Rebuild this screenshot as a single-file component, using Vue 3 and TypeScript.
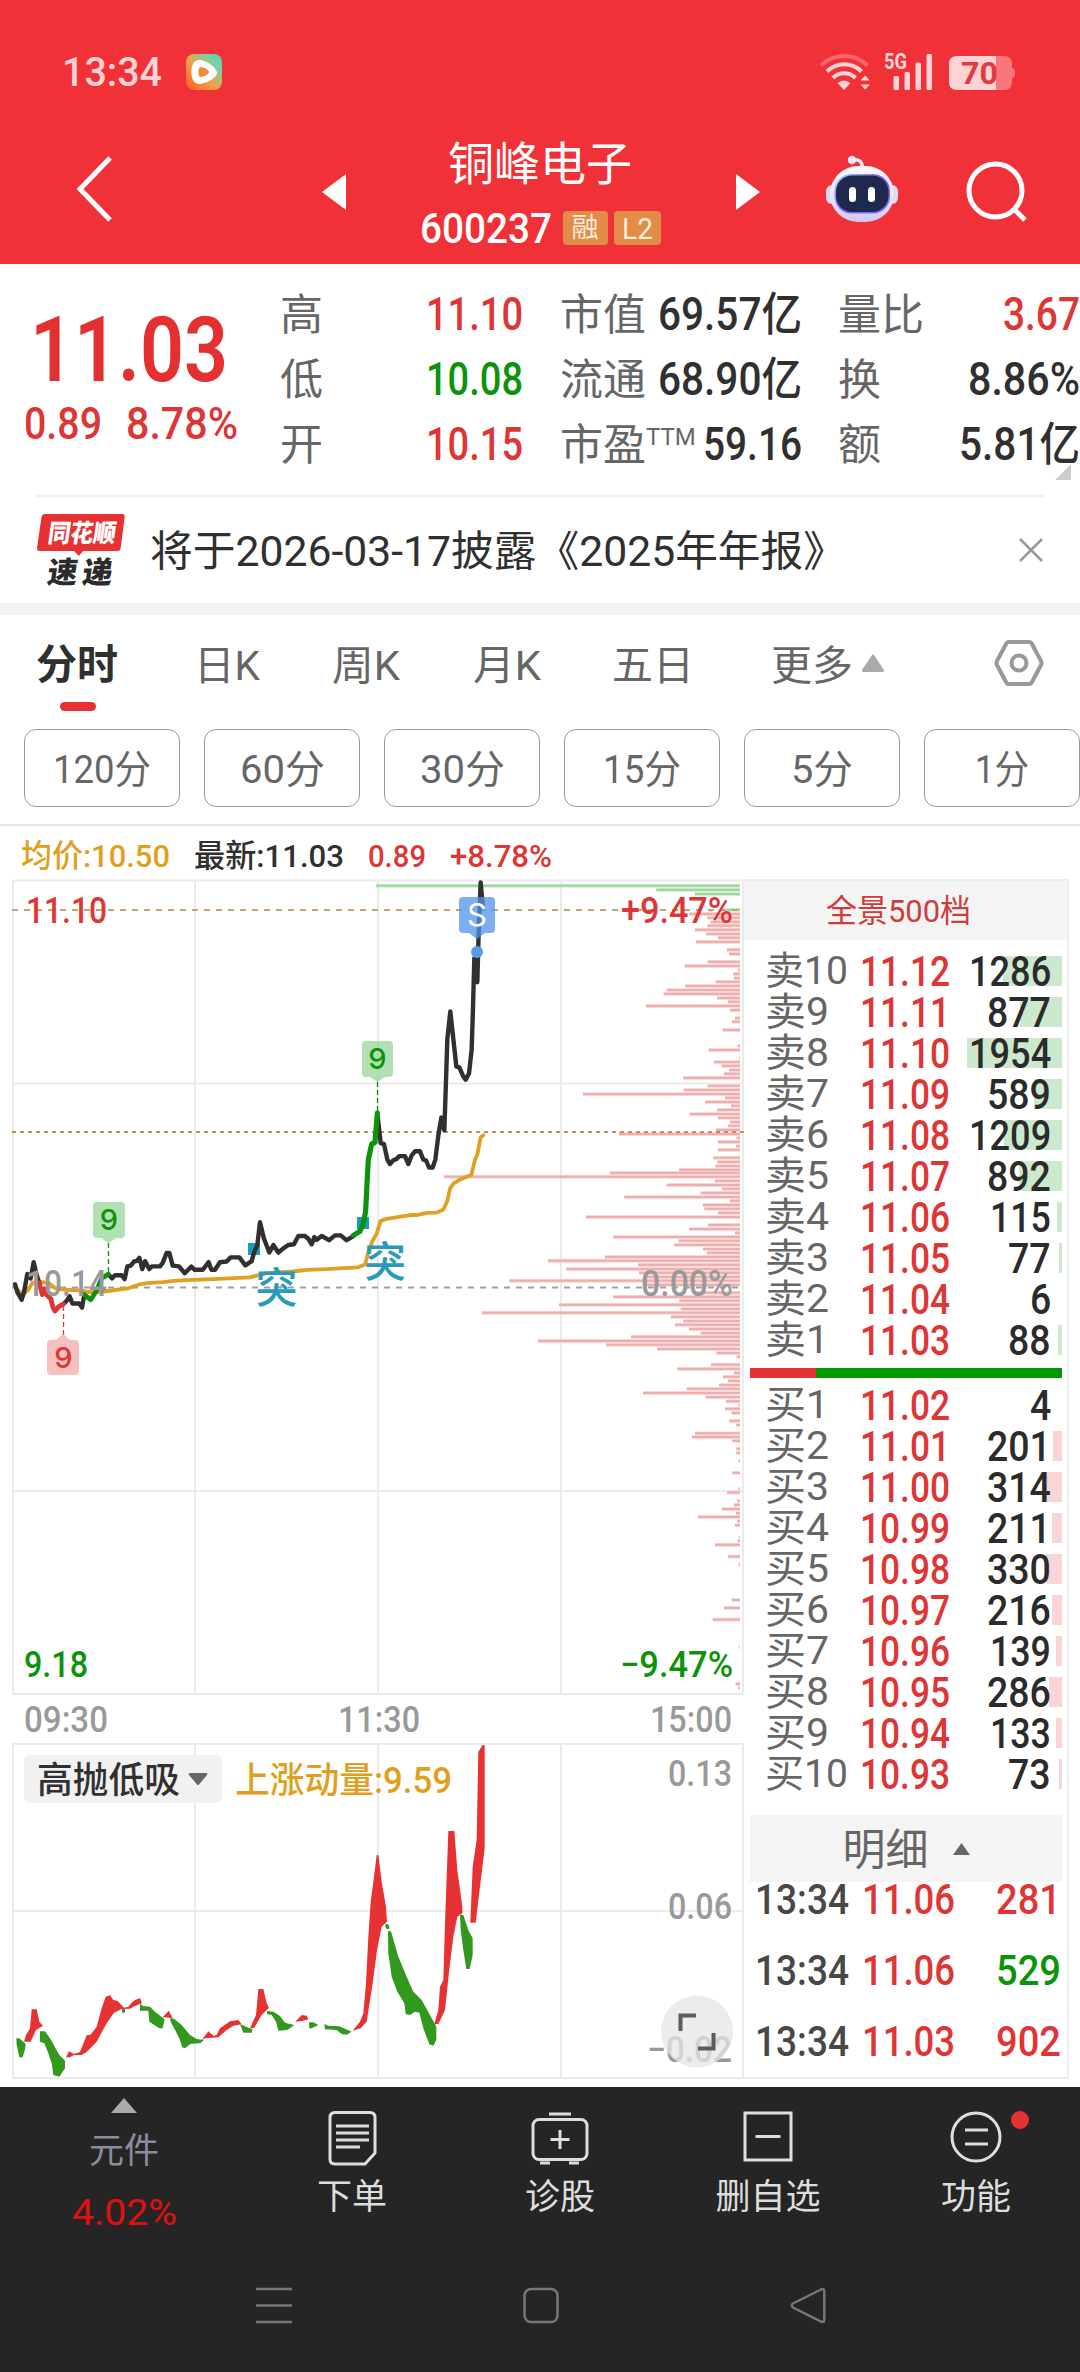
<script setup lang="ts">
import { h } from 'vue'

interface FitProps {
  t: string
  w: number
  s: number
  c?: string
  b?: number
}

// Text run drawn at a fixed advance width; the box is one em tall with the capitals centred in it.
const Fit = (p: FitProps) =>
  h(
    'svg',
    { width: p.w, height: p.s, viewBox: `0 0 ${p.w} ${p.s}`, style: 'display:block;flex:none;overflow:visible' },
    [
      h(
        'text',
        {
          x: 0,
          y: p.s * 0.856,
          'font-size': p.s,
          'font-weight': p.b ?? 400,
          fill: p.c ?? '#333',
          textLength: p.w,
          lengthAdjust: 'spacingAndGlyphs',
        },
        p.t,
      ),
    ],
  )
Fit.props = ['t', 'w', 's', 'c', 'b']

const RED = '#de3535'
const GREEN = '#0b930b'
const INK = '#303030'

const stats = [
  [
    { k: '高', v: '11.10', w: 97, c: RED },
    { k: '低', v: '10.08', w: 97, c: GREEN },
    { k: '开', v: '10.15', w: 97, c: RED },
  ],
  [
    { k: '市值', v: '69.57亿', w: 144, c: INK },
    { k: '流通', v: '68.90亿', w: 144, c: INK },
    { k: '市盈', sup: 'TTM', v: '59.16', w: 99, c: INK },
  ],
  [
    { k: '量比', v: '3.67', w: 77, c: RED },
    { k: '换', v: '8.86%', w: 112, c: INK },
    { k: '额', v: '5.81亿', w: 121, c: INK },
  ],
]

const tabs = [
  { t: '日K', w: 66, ml: 76 },
  { t: '周K', w: 68, ml: 72 },
  { t: '月K', w: 68, ml: 73 },
  { t: '五日', w: 82, ml: 71 },
  { t: '更多', w: 82, ml: 77 },
]

const periods = [
  { t: '120分', w: 98 },
  { t: '60分', w: 85 },
  { t: '30分', w: 85 },
  { t: '15分', w: 78 },
  { t: '5分', w: 62 },
  { t: '1分', w: 54 },
]

interface Level {
  n: number
  p: string
  q: number
  bar: number
}
const sells: Level[] = [
  { n: 10, p: '11.12', q: 1286, bar: 59 },
  { n: 9, p: '11.11', q: 877, bar: 42 },
  { n: 8, p: '11.10', q: 1954, bar: 95 },
  { n: 7, p: '11.09', q: 589, bar: 28 },
  { n: 6, p: '11.08', q: 1209, bar: 58 },
  { n: 5, p: '11.07', q: 892, bar: 43 },
  { n: 4, p: '11.06', q: 115, bar: 5 },
  { n: 3, p: '11.05', q: 77, bar: 3 },
  { n: 2, p: '11.04', q: 6, bar: 0 },
  { n: 1, p: '11.03', q: 88, bar: 4 },
]
const buys: Level[] = [
  { n: 1, p: '11.02', q: 4, bar: 0 },
  { n: 2, p: '11.01', q: 201, bar: 9 },
  { n: 3, p: '11.00', q: 314, bar: 15 },
  { n: 4, p: '10.99', q: 211, bar: 10 },
  { n: 5, p: '10.98', q: 330, bar: 16 },
  { n: 6, p: '10.97', q: 216, bar: 10 },
  { n: 7, p: '10.96', q: 139, bar: 6 },
  { n: 8, p: '10.95', q: 286, bar: 13 },
  { n: 9, p: '10.94', q: 133, bar: 6 },
  { n: 10, p: '10.93', q: 73, bar: 3 },
]
const books = [
  { side: '卖', cls: 'sell', rows: sells },
  { side: '买', cls: 'buy', rows: buys },
]
const trades = [
  { p: '11.06', q: '281', c: RED },
  { p: '11.06', q: '529', c: GREEN },
  { p: '11.03', q: '902', c: RED },
]

// A leading 1 takes less room than the other digits.
const qtyWidth = (q: number) => {
  const s = String(q)
  return s.length * 21.3 - (s[0] === '1' ? 3 : 0)
}

// Volume profile: y and left edge in chart units, every bar ends at 1140.
const unpack = (s: string): [number, number][] =>
  s.split(' ').map((e) => e.split(':').map(Number) as [number, number])
const askBars = unpack('75:48 87:889 99:1005 145:1100')
const chips = unpack(
  '157:988 168:1042 180:1052 191:1042 203:1005 215:1038 226:1074 238:1008 261:1101 273:1107 296:1043 308:974 319:1134 331:1120 343:1122 354:1067 366:976 378:920 389:911 401:1071 412:1104 424:858 436:1110 459:1125 470:1116 494:1088 540:1133 552:1046 575:1138 587:1062 598:1085 610:1107 621:1092 633:970 656:1043 668:971 680:669 691:1095 703:1035 714:1113 726:1071 738:989 749:1074 761:1110 772:1104 784:1068 796:777 807:1130 819:1074 831:1128 842:1074 865:1060 877:1072 889:1067 900:957 909:750 920:252 932:1065 944:920 955:1086 967:1022 979:793 990:1110 1002:1029 1013:1033 1025:1074 1037:678 1060:1044 1072:987 1083:1125 1095:760 1106:956 1118:942 1130:1029 1141:1041 1153:735 1164:564 1176:834 1188:619 1199:837 1211:850 1222:448 1234:857 1257:1000 1269:760 1280:958 1292:597 1304:962 1315:366 1327:933 1339:970 1350:945 1362:987 1374:1022 1385:813 1397:534 1408:738 1420:891 1432:1070 1443:1130 1466:1053 1478:952 1490:1122 1501:1089 1513:1104 1525:1077 1536:980 1548:849 1560:1037 1572:1098 1583:1136 1594:1095 1606:1115 1629:1108 1641:1129 1665:1005 1676:996 1687:1117 1710:1129 1722:1129 1745:1136 1780:1117 1826:1136 1837:1101 1861:1131 1873:1122 1885:1086 1897:1128 1908:1014 1920:1132 1932:1125 1966:1137 1977:1133 1989:1065 2023:1104 2046:1136 2149:1115 2172:1092 2206:1058 2287:1138 2393:1127 2405:1135',
)
const bars = [
  ...askBars.map(([y, x]) => ({ y, x, light: '#c4eec4', dark: '#a2d3a2' })),
  ...chips.map(([y, x]) => ({ y, x, light: '#fdcfcf', dark: '#eab0b0' })),
].map((b) => ({ ...b, y: 860 + b.y / 2.904, x: 360 + b.x / 3 }))

const priceLines = [
  { c: '#303030', w: 4.4, p: '45,1232 52,1255 65,1277 72,1255 82,1202 92,1215 101,1168 110,1205 118,1228' },
  { c: '#303030', w: 4.4, p: '190,1290 200,1280 209,1267 217,1288 238,1288 246,1300 253,1262' },
  {
    c: '#303030',
    w: 4.4,
    p: '325,1203 336,1215 345,1206 365,1206 374,1217 382,1180 392,1178 402,1166 411,1164 418,1155 427,1188 435,1165 448,1188 456,1180 480,1180 488,1170 500,1141 508,1141 518,1178 537,1180 554,1200 574,1181 584,1190 608,1190 626,1168 634,1190 645,1190 660,1168 680,1166 692,1154 718,1154 736,1177 755,1165 762,1140 772,1118 780,1052 792,1100 808,1140 820,1118 835,1140 850,1128 865,1118 882,1116 895,1092 915,1092 925,1100 935,1116 943,1095 950,1103 965,1092 987,1104 1005,1090 1022,1090 1040,1104 1060,1092',
  },
  {
    c: '#303030',
    w: 4.4,
    p: '1133,745 1142,822 1152,825 1162,870 1170,883 1180,872 1190,868 1198,860 1215,860 1225,883 1235,858 1245,846 1260,846 1270,870 1278,872 1287,893 1298,893 1306,870 1315,800 1324,748 1333,785 1336,700 1342,520 1351,440 1360,520 1369,600 1378,602 1388,625 1397,638 1407,620 1415,550 1419,430 1423,285 1428,285 1432,355 1436,210 1442,65 1448,130',
  },
]
const tintLines = [
  { c: '#de3535', w: 4.8, p: '118,1228 127,1262 134,1245 142,1265 153,1275 158,1297 165,1310 175,1298 190,1290' },
  { c: '#0b930b', w: 4.8, p: '253,1262 263,1270 272,1277 290,1250 305,1215 325,1203' },
  { c: '#0b930b', w: 5.2, p: '1060,1090 1080,1078 1090,1055 1097,1020 1101,940 1105,870 1115,825 1125,820 1132,735' },
]
const avgLine =
  '45,1240 68,1262 85,1248 98,1227 120,1225 145,1228 165,1243 200,1248 235,1250 270,1255 300,1255 350,1248 380,1245 420,1232 450,1228 490,1226 520,1222 560,1220 640,1217 700,1214 750,1212 770,1207 800,1200 880,1195 920,1190 980,1188 1030,1185 1075,1183 1095,1175 1105,1140 1117,1107 1130,1085 1142,1048 1160,1042 1230,1031 1250,1031 1280,1025 1310,1024 1330,1015 1342,990 1350,955 1360,940 1380,928 1400,920 1414,915 1425,870 1432,856 1442,805 1450,799'

const momentum = [
  { up: false, p: '49,1195 58,1195 77,1212 75,1228 68,1252 58,1252 50,1215' },
  { up: true, p: '72,1205 78,1185 90,1165 95,1108 110,1108 118,1145 129,1157 108,1170 92,1205' },
  { up: false, p: '120,1174 135,1174 150,1195 178,1245 195,1262 195,1285 178,1310 160,1305 155,1270 145,1240 133,1210 120,1205' },
  { up: true, p: '198,1252 207,1234 222,1242 240,1236 260,1186 272,1184 290,1160 305,1105 317,1070 330,1066 340,1080 352,1082 372,1103 385,1100 395,1088 405,1080 420,1074 426,1090 405,1098 390,1106 365,1107 342,1118 320,1150 290,1205 260,1236 245,1245 220,1246 210,1252' },
  { up: false, p: '366,1107 375,1107 375,1118 366,1118' },
  { up: false, p: '420,1092 430,1098 450,1100 465,1115 494,1138 488,1165 478,1165 448,1145 445,1112 420,1112' },
  { up: true, p: '488,1132 506,1112 518,1134' },
  { up: false, p: '510,1134 522,1136 545,1155 570,1185 590,1197 612,1200 600,1210 572,1211 555,1225 547,1222 540,1200 528,1175 512,1145' },
  { up: true, p: '605,1200 625,1174 642,1188 650,1184 660,1165 690,1144 715,1140 725,1153 700,1157 680,1170 655,1192 615,1195' },
  { up: false, p: '720,1153 757,1168 755,1178 730,1178' },
  { up: true, p: '750,1165 768,1125 775,1047 790,1047 800,1090 807,1103 785,1125 762,1165' },
  { up: false, p: '801,1113 820,1115 840,1128 855,1148 883,1155 862,1170 835,1172 828,1145 815,1125 801,1122' },
  { up: true, p: '886,1145 905,1125 920,1127 925,1138 905,1143' },
  { up: false, p: '927,1147 940,1147 955,1155 935,1165 928,1165' },
  { up: false, p: '973,1152 985,1157 1018,1159 1055,1175 1040,1184 1025,1182 1010,1170 975,1168' },
  { up: true, p: '1058,1172 1080,1145 1090,1120 1098,1030 1105,890 1112,785 1122,710 1130,645 1135,645 1145,725 1158,800 1161,845 1145,860 1132,925 1118,1030 1100,1145 1082,1165' },
  { up: false, p: '1155,853 1165,853 1169,866 1158,866' },
  { up: false, p: '1164,874 1173,874 1195,950 1220,1010 1240,1055 1265,1080 1290,1125 1309,1160 1309,1200 1300,1217 1288,1213 1270,1165 1258,1118 1245,1115 1230,1125 1217,1122 1213,1090 1192,1055 1175,1010 1165,940' },
  { up: true, p: '1303,1152 1315,1110 1320,1040 1330,1020 1335,850 1345,573 1363,573 1372,690 1387,800 1387,820 1372,830 1360,890 1350,970 1335,1110 1325,1132 1315,1152' },
  { up: false, p: '1380,825 1390,825 1405,870 1418,895 1418,945 1409,987 1399,987 1390,930 1382,870' },
  { up: true, p: '1411,848 1418,680 1430,600 1435,335 1448,315 1454,315 1454,625 1440,740 1427,848' },
]

const labels = [
  { t: '11.10', x: 26, y: 910, w: 81, s: 36, c: RED, b: 500 },
  { t: '+9.47%', x: 621, y: 910, w: 112, s: 36, c: RED, b: 500 },
  { t: '10.14', x: 26, y: 1283, w: 81, s: 36, c: '#999', b: 500 },
  { t: '0.00%', x: 641, y: 1283, w: 92, s: 36, c: '#999', b: 500 },
  { t: '9.18', x: 24, y: 1664.5, w: 64, s: 36, c: GREEN, b: 500 },
  { t: '−9.47%', x: 620, y: 1664.5, w: 113, s: 36, c: GREEN, b: 500 },
  { t: '09:30', x: 24, y: 1719.5, w: 84, s: 36, c: '#999', b: 500 },
  { t: '11:30', x: 338, y: 1719.5, w: 82, s: 36, c: '#999', b: 500 },
  { t: '15:00', x: 650, y: 1719.5, w: 82, s: 36, c: '#999', b: 500 },
  { t: '0.13', x: 668, y: 1773.5, w: 64, s: 36, c: '#999', b: 500 },
  { t: '0.06', x: 668, y: 1906.5, w: 64, s: 36, c: '#999', b: 500 },
  { t: '−0.02', x: 647, y: 2049, w: 85, s: 36, c: '#999', b: 500 },
  { t: '上涨动量:9.59', x: 235, y: 1780, w: 217, s: 36, c: '#e0a01e', b: 500 },
]
</script>

<template>
  <div class="app">
    <header class="top">
      <div class="status">
        <Fit t="13:34" :w="100" :s="40" c="#ffd2d4" :b="500" />
        <svg class="media" width="36" height="36" viewBox="0 0 36 36">
          <defs>
            <linearGradient id="media" x1="0" y1="1" x2="1" y2="0">
              <stop offset="0" stop-color="#ff5a1c" />
              <stop offset=".45" stop-color="#f3a04b" />
              <stop offset=".75" stop-color="#7fd0a0" />
              <stop offset="1" stop-color="#3fdcc0" />
            </linearGradient>
          </defs>
          <rect width="36" height="36" rx="8" fill="url(#media)" />
          <path d="M12 6c7-1 18 7 19 12s-11 12-18 12c-10 0-10-23-1-24z" fill="#fff" />
          <path d="M14 13c4 0 9 3 9 5s-5 5-9 5c-2 0-2-10 0-10z" fill="#ee8c3c" />
        </svg>
        <svg class="signals" width="200" height="44" viewBox="818 50 200 44">
          <g fill="none" stroke="#ffd2d4" stroke-width="4">
            <path d="M821 65.500a33 33 0 0 1 46.500 0" opacity=".35" />
            <path d="M827 71.500a24 24 0 0 1 34.500 0" />
            <path d="M833 78a15.500 15.500 0 0 1 22.500 0" />
          </g>
          <path d="M837.500 83q6.500-5 13 0l-6.500 7z M860.500 80.500l4.700-5 4.700 5z M860.500 84.500l4.700 5 4.700-5z" fill="#ffd2d4" />
          <g fill="#ffd2d4">
            <rect x="893.500" y="76" width="5.500" height="14" rx="1.500" />
            <rect x="904.500" y="72" width="5.500" height="18" rx="1.500" />
            <rect x="915.500" y="62.500" width="5.500" height="27.500" rx="1.500" />
            <rect x="926.500" y="54" width="5.500" height="36" rx="1.500" />
          </g>
          <text x="884" y="69" font-size="22" font-weight="700" fill="#ffd2d4" textLength="23" lengthAdjust="spacingAndGlyphs">5G</text>
          <path d="M996 56h8q8 0 8 8v4q3 0 3 5t-3 5v4q0 8-8 8h-8z" fill="#f8777c" />
          <path d="M996 56h-39q-8 0-8 8v18q0 8 8 8h39z" fill="#ffd2d4" />
          <text x="961" y="84" font-size="31" font-weight="700" fill="#e23a42" textLength="37" lengthAdjust="spacingAndGlyphs">70</text>
        </svg>
      </div>
      <div class="nav">
        <svg class="back" width="40" height="66" viewBox="0 0 40 66"><path d="M37 2 7 33l30 31" fill="none" stroke="#fff" stroke-width="5" /></svg>
        <svg class="prev" width="24" height="36" viewBox="0 0 24 36"><path d="M24 0v36L0 18z" fill="#fff" /></svg>
        <div class="title">
          <h1>铜峰电子</h1>
          <div class="code">
            <Fit t="600237" :w="132" :s="42" c="#fff" :b="500" />
            <span class="tag r">融</span>
            <span class="tag"><Fit t="L2" :w="31" :s="29" c="#ffeedd" /></span>
          </div>
        </div>
        <svg class="next" width="24" height="36" viewBox="0 0 24 36"><path d="M0 0v36l24-18z" fill="#fff" /></svg>
        <svg class="robot" width="74" height="68" viewBox="824 155 74 68">
          <defs>
            <linearGradient id="shell" x1="0" y1="0" x2="0" y2="1">
              <stop offset="0" stop-color="#fdfbff" />
              <stop offset=".6" stop-color="#e6e2f6" />
              <stop offset="1" stop-color="#cfc9f2" />
            </linearGradient>
            <linearGradient id="rim" x1="0" y1="0" x2="1" y2="1">
              <stop offset="0" stop-color="#9fd2f6" />
              <stop offset=".5" stop-color="#8c5cf0" />
              <stop offset="1" stop-color="#7b6cf5" />
            </linearGradient>
          </defs>
          <path d="M852 160q9-2 9.500 8" fill="none" stroke="#f1eefb" stroke-width="3.500" />
          <circle cx="851" cy="160" r="4.200" fill="#eceaf8" />
          <rect x="825" y="185" width="12" height="19" rx="6" fill="#dedaf4" />
          <rect x="885" y="185" width="12" height="19" rx="6" fill="#dedaf4" />
          <rect x="829" y="166" width="64" height="56" rx="28" fill="url(#shell)" />
          <rect x="833.500" y="174" width="55.500" height="39.500" rx="17" fill="url(#rim)" />
          <rect x="835" y="175.500" width="52.500" height="36.500" rx="16" fill="#1d2a4d" />
          <rect x="848" y="187" width="7" height="15" rx="3.500" fill="#fff" />
          <rect x="867" y="187" width="7" height="15" rx="3.500" fill="#fff" />
        </svg>
        <svg class="search" width="62" height="62" viewBox="965 160 62 62">
          <g fill="none" stroke="#fff" stroke-width="5"><circle cx="994.500" cy="190.500" r="26.500" /><path d="m1013 209 11 11" /></g>
        </svg>
      </div>
    </header>

    <section class="quote">
      <div class="last">
        <Fit t="11.03" :w="198" :s="91" c="#e33030" :b="600" />
        <div class="chg">
          <Fit t="0.89" :w="78" :s="44" :c="RED" :b="500" />
          <Fit t="8.78%" :w="112" :s="44" :c="RED" :b="500" />
        </div>
      </div>
      <div v-for="(col, i) in stats" :key="i" class="stat-col">
        <div v-for="s in col" :key="s.k" class="stat">
          <span class="k">{{ s.k }}<sup v-if="'sup' in s">{{ s.sup }}</sup></span>
          <Fit :t="s.v" :w="s.w" :s="46" :c="s.c" :b="500" />
        </div>
      </div>
      <i class="corner"></i>
    </section>

    <section class="notice">
      <svg class="brand" width="90" height="76" viewBox="36 511 90 76">
        <path d="M45 513h77q3 0 2.700 3l-4 31q-.4 3-3.400 3H83l-4 5-5-5H40q-3.300 0-3-3l4.500-31q.4-3 3.500-3z" fill="#e63232" />
        <g font-weight="900" transform="skewX(-8)">
          <text x="123" y="541" font-size="25" fill="#fff" textLength="68" lengthAdjust="spacingAndGlyphs">同花顺</text>
          <text x="128" y="582" font-size="30" fill="#2b2b2b" textLength="30" lengthAdjust="spacingAndGlyphs">速</text>
          <text x="163" y="582" font-size="30" fill="#2b2b2b" textLength="30" lengthAdjust="spacingAndGlyphs">递</text>
        </g>
      </svg>
      <Fit class="msg" t="将于2026-03-17披露《2025年年报》" :w="696" :s="42" c="#303030" />
      <svg class="x" width="26" height="26" viewBox="0 0 26 26"><path d="m2 2 22 22M24 2 2 24" stroke="#999" stroke-width="2.500" /></svg>
    </section>

    <section class="tabs">
      <div class="tab on">分时</div>
      <Fit v-for="t in tabs" :key="t.t" :t="t.t" :w="t.w" :s="41" c="#666" :style="{ marginLeft: t.ml + 'px' }" />
      <svg class="more" width="22" height="18" viewBox="0 0 22 18"><path d="M10 1q1-1.500 2 0l10 15q.5 2-1.500 2h-19q-2 0-1.500-2z" fill="#aaa" /></svg>
      <svg class="gear" width="50" height="48" viewBox="0 0 50 48">
        <g fill="none" stroke="#999" stroke-width="4"><path d="M15 3h20q2 0 3 2l9 17q1 2 0 4l-9 17q-1 2-3 2H15q-2 0-3-2L3 26q-1-2 0-4l9-17q1-2 3-2z" /><circle cx="25" cy="24" r="7.500" /></g>
      </svg>
    </section>
    <section class="periods">
      <button v-for="p in periods" :key="p.t"><Fit :t="p.t" :w="p.w" :s="39" c="#666" /></button>
    </section>

    <section class="legend">
      <Fit t="均价:10.50" :w="149" :s="32" c="#e0a01e" :b="500" />
      <Fit t="最新:11.03" :w="150" :s="32" c="#303030" :b="500" />
      <Fit t="0.89" :w="58" :s="32" :c="RED" :b="500" />
      <Fit t="+8.78%" :w="102" :s="32" :c="RED" :b="500" />
    </section>

    <main class="market">
      <svg class="chart" width="744" height="1208" viewBox="0 879 744 1208">
        <g stroke="#ebebeb" stroke-width="2" fill="none">
          <rect x="13" y="880.500" width="730" height="813.500" />
          <path d="M195 880V1694M378 880V1694M561 880V1694M13 1083.500H743M13 1491H743" />
          <rect x="13" y="1744" width="730" height="334" />
          <path d="M195 1744V2078M378 1744V2078M561 1744V2078M13 1911H743" />
        </g>
        <g v-for="(b, i) in bars" :key="i">
          <rect :x="b.x" :y="b.y - 2" :width="740 - b.x" height="4" :fill="b.light" fill-opacity=".75" />
          <rect :x="b.x" :y="b.y - 1.200" :width="740 - b.x" height="2.200" :fill="b.dark" />
        </g>
        <g stroke-width="2" fill="none">
          <path d="M12 910H740" stroke="#bfa676" stroke-dasharray="6 6" />
          <path d="M12 1132H744" stroke="#c98f50" stroke-dasharray="4 4" />
          <path d="M12 1287.500H740" stroke="#a0a0a0" stroke-dasharray="6 6" />
        </g>
        <g fill="#159ec0"><rect x="248" y="1243" width="12" height="12" /><rect x="357" y="1217" width="12" height="12" /></g>
        <g transform="translate(0 860) scale(.33333 .34435)" fill="none" stroke-linejoin="round" stroke-linecap="round">
          <polyline :points="avgLine" stroke="#dfa024" stroke-width="3.800" vector-effect="non-scaling-stroke" />
          <polyline v-for="(l, i) in priceLines" :key="'p' + i" :points="l.p" :stroke="l.c" :stroke-width="l.w" vector-effect="non-scaling-stroke" />
          <polyline v-for="(l, i) in tintLines" :key="'t' + i" :points="l.p" :stroke="l.c" :stroke-width="l.w" vector-effect="non-scaling-stroke" />
        </g>
        <g fill="#2a9ab8" font-size="42" font-weight="500" text-anchor="middle"><text x="276.500" y="1303">突</text><text x="385" y="1277">突</text></g>
        <g fill="none" stroke-width="1.300" stroke-dasharray="5 3">
          <path d="M108.500 1243V1273M377.500 1082V1112" stroke="#0b930b" />
          <path d="M63.500 1306V1335" stroke="#de3535" />
        </g>
        <path d="M97 1202h24q4 0 4 4v28q0 4-4 4h-5l-7.500 5-7.500-5h-4q-4 0-4-4v-28q0-4 4-4z" fill="#8ed18e" fill-opacity=".68" />
        <path d="M366 1041h23q4 0 4 4v28q0 4-4 4h-4l-7.500 5-7.500-5h-4q-4 0-4-4v-28q0-4 4-4z" fill="#8ed18e" fill-opacity=".68" />
        <path d="M51 1340h5l7-6 7 6h5q4 0 4 4v27q0 4-4 4H51q-4 0-4-4v-27q0-4 4-4z" fill="#f19a9a" fill-opacity=".62" />
        <g class="inter" font-size="29" font-weight="500" text-anchor="middle">
          <text x="109" y="1229.500" fill="#0b930b">9</text>
          <text x="377.500" y="1068.500" fill="#0b930b">9</text>
          <text x="63.500" y="1367.500" fill="#de3535">9</text>
        </g>
        <path d="M463 897h28q4 0 4 4v28q0 4-4 4h-6l-8 6-8-6h-6q-4 0-4-4v-28q0-4 4-4z" fill="#4f94ee" fill-opacity=".75" />
        <circle cx="477" cy="952" r="6" fill="#5a9be8" />
        <text class="inter" x="477" y="926" font-size="31" fill="#fff" text-anchor="middle">S</text>

        <g transform="translate(0 1640) scale(.33333)">
          <polygon v-for="(m, i) in momentum" :key="i" :points="m.p" :fill="m.up ? '#e63232' : '#32991e'" />
        </g>
        <rect x="24" y="1755" width="198" height="48" rx="6" fill="#efefef" fill-opacity=".9" />
        <text x="37" y="1793" font-size="36" font-weight="500" fill="#303030" textLength="143" lengthAdjust="spacingAndGlyphs">高抛低吸</text>
        <path d="M190 1773h16q2 0 1 2l-8 9.500q-1 1-2 0l-8-9.500q-1-2 1-2z" fill="#666" />
        <text
          v-for="l in labels"
          :key="l.t"
          :x="l.x"
          :y="l.y + l.s * 0.356"
          :font-size="l.s"
          :font-weight="l.b"
          :fill="l.c"
          :textLength="l.w"
          lengthAdjust="spacingAndGlyphs"
        >{{ l.t }}</text>
        <circle cx="697" cy="2031.500" r="36" fill="#e6e6e6" fill-opacity=".75" />
        <path d="M680.500 2031v-15.500H696M713.500 2033v15.500H698" fill="none" stroke="#5c5c5c" stroke-width="4" />
      </svg>

      <aside class="book">
        <div class="pano"><Fit t="全景500档" :w="145" :s="32" c="#cf3c3c" /></div>
        <template v-for="b in books" :key="b.side">
          <div class="levels" :class="b.cls">
            <div v-for="r in b.rows" :key="r.n" class="level">
              <i class="depth" :style="{ width: r.bar + 'px' }"></i>
              <Fit class="fore" :t="b.side + r.n" :w="r.n > 9 ? 83 : 64" :s="39" c="#666" />
              <Fit class="fore px" :t="r.p" :w="90" :s="42" :c="RED" :b="500" />
              <Fit class="fore qty" :t="String(r.q)" :w="qtyWidth(r.q)" :s="42" c="#2b2b2b" :b="500" />
            </div>
          </div>
          <div v-if="b.side === '卖'" class="ratio"><i></i></div>
        </template>
        <div class="detail">
          <span>明细</span>
          <svg width="17" height="12" viewBox="0 0 17 12"><path d="M0 12 8.500 0 17 12z" fill="#666" /></svg>
        </div>
        <div v-for="(t, i) in trades" :key="i" class="trade">
          <Fit t="13:34" :w="94" :s="42" c="#484848" :b="500" />
          <Fit class="tp" :t="t.p" :w="93" :s="42" :c="RED" :b="500" />
          <Fit class="qty" :t="t.q" :w="65" :s="42" :c="t.c" :b="500" />
        </div>
      </aside>
    </main>

    <footer class="bottom">
      <div class="actions">
        <div class="act sector">
          <svg width="26" height="15" viewBox="0 0 26 15"><path d="M0 15 13 0l13 15z" fill="#aaa" /></svg>
          <span>元件</span>
          <Fit t="4.02%" :w="105" :s="37" c="#e01010" />
        </div>
        <div class="act">
          <svg width="60" height="60" viewBox="-7 -4 60 60" fill="none" stroke="#dedede" stroke-width="3">
            <path d="M6 1.500h35q5 0 5 5V42L36 53H6q-5 0-5-5V6.500q0-5 5-5z" />
            <path d="M7 15h33M7 22h33M7 29h33M7 36h24" />
          </svg>
          <span>下单</span>
        </div>
        <div class="act">
          <svg width="60" height="60" viewBox="0 -2 60 60" fill="none" stroke="#dedede" stroke-width="3">
            <rect x="3" y="10.500" width="54" height="40" rx="6" />
            <path d="M19 5h22M30 21v19M20.500 30.500h19M10 54h10M39 54h10" />
          </svg>
          <span>诊股</span>
        </div>
        <div class="act">
          <svg width="60" height="60" viewBox="-6 -7 60 60" fill="none" stroke="#dedede" stroke-width="3">
            <rect x="1" y="-1" width="46" height="47" />
            <path d="M11.500 22.500h25" />
          </svg>
          <span>删自选</span>
        </div>
        <div class="act">
          <svg width="60" height="60" viewBox="0 -2 60 60" fill="none" stroke="#dedede" stroke-width="3">
            <circle cx="30" cy="28" r="24" />
            <path d="M19 21h23M19 35h23" />
          </svg>
          <span>功能</span>
          <i class="dot"></i>
        </div>
      </div>
      <div class="sys">
        <svg width="36" height="37" viewBox="0 0 36 37"><path d="M0 2h36M0 18.500h36M0 35h36" stroke="#777" stroke-width="2.500" /></svg>
        <svg width="36" height="37" viewBox="0 0 36 37"><rect x="1.500" y="2" width="33" height="33" rx="6.500" fill="none" stroke="#777" stroke-width="2.500" /></svg>
        <svg width="36" height="37" viewBox="0 0 36 37"><path d="M31 2.500 3 16.500q-2.500 2 0 4L31 34.500q3.300 1.500 3.300-2v-28q0-3.500-3.300-2z" fill="none" stroke="#777" stroke-width="2.500" /></svg>
      </div>
    </footer>
  </div>
</template>

<style>
html,
body {
  margin: 0;
  background: #fff;
  overflow: hidden;
}
</style>

<style scoped>
.app {
  width: 1080px;
  height: 2372px;
  display: flex;
  flex-direction: column;
  overflow: hidden;
  background: #fff;
  font-family: Roboto, 'Noto Sans CJK SC', sans-serif;
  color: #303030;
}
.app > * {
  flex: none;
  box-sizing: border-box;
}
.top {
  height: 264px;
  background: #f13138;
  padding-top: 50px;
  box-sizing: border-box;
}
.status {
  height: 44px;
  display: flex;
  align-items: center;
  padding: 0 62px;
}
.media {
  margin-left: 24px;
}
.signals {
  margin-left: auto;
}
.nav {
  display: flex;
  align-items: flex-start;
  margin-top: 42px;
  padding-left: 73px;
}
.back {
  margin-top: 20px;
}
.prev {
  margin: 38px 0 0 209px;
}
.title {
  width: 388px;
  margin: -4px 2px 0 0;
  display: flex;
  flex-direction: column;
  align-items: center;
}
h1 {
  margin: 0;
  font-size: 46px;
  font-weight: 400;
  line-height: 64px;
  color: #fff;
}
.code {
  display: flex;
  align-items: center;
  margin-top: 15px;
  height: 34px;
}
.tag {
  display: flex;
  align-items: center;
  justify-content: center;
  width: 47px;
  height: 34px;
  margin-left: 6px;
  border-radius: 4px;
  background: #e28c48;
  color: #ffeedd;
  font-size: 27px;
  line-height: 34px;
}
.tag.r {
  width: 45px;
  margin-left: 11px;
}
.next {
  margin-top: 38px;
}
.robot {
  margin: 19px 0 0 65px;
}
.search {
  margin: 24px 0 0 67px;
}
.quote {
  position: relative;
  display: flex;
  height: 231px;
  padding-top: 17px;
}
.last {
  width: 280px;
  padding-left: 30px;
  padding-top: 22px;
  box-sizing: border-box;
}
.chg {
  display: flex;
  gap: 24px;
  margin: 7px 0 0 -6px;
}
.stat-col {
  width: 243px;
  margin-right: 37px;
}
.stat-col:nth-child(3) {
  width: 242px;
  margin-right: 36px;
}
.stat-col:nth-child(4) {
  width: 242px;
  margin-right: 0;
}
.stat {
  height: 65px;
  display: flex;
  align-items: center;
  justify-content: space-between;
}
.k {
  font-size: 43px;
  line-height: 61px;
  padding-top: 4px;
  color: #666;
  white-space: nowrap;
}
sup {
  font-size: 24px;
  line-height: 0;
  vertical-align: 15px;
}
.corner {
  position: absolute;
  right: 9px;
  top: 200px;
  border: 8.5px solid transparent;
  border-right-color: #ccc;
  border-bottom-color: #ccc;
}
.notice {
  position: relative;
  display: flex;
  align-items: center;
  height: 108px;
  margin: 0 36px;
  border-top: 2px solid #eee;
}
.msg {
  margin: 2px 0 0 24px;
}
.x {
  margin-left: auto;
}
.tabs {
  height: 114px;
  border-top: 12px solid #f4f4f4;
  display: flex;
  align-items: flex-start;
  padding: 30px 0 0 36px;
}
.tab {
  position: relative;
  font-size: 41px;
  line-height: 41px;
  font-weight: 700;
  width: 82px;
}
.tab::after {
  content: '';
  position: absolute;
  left: 24px;
  top: 57px;
  width: 36px;
  height: 9px;
  border-radius: 5px;
  background: #e63232;
}
.more {
  margin: 9px 0 0 9px;
}
.gear {
  margin: -6px 0 0 110px;
}
.periods {
  height: 109px;
  padding: 12px 0 0 24px;
  display: flex;
  gap: 24px;
  border-bottom: 2px solid #e6e6e6;
}
button {
  flex: none;
  width: 156px;
  height: 78px;
  padding: 2px 0 0;
  display: flex;
  align-items: center;
  justify-content: center;
  border: 1.5px solid #999;
  border-radius: 12px;
  background: #fff;
  box-sizing: border-box;
  font-family: inherit;
}
.legend {
  height: 53px;
  display: flex;
  align-items: center;
  padding: 6px 0 0 21px;
  gap: 24px;
}
.market {
  display: flex;
  height: 1208px;
}
.chart {
  flex: none;
  display: block;
}
.inter {
  font-family: Inter, sans-serif;
}
.book {
  width: 325px;
  height: 1200px;
  border: 2px solid #ededed;
  border-left: 0;
  box-sizing: border-box;
}
.pano {
  height: 59px;
  background: #f4f4f4;
  display: flex;
  align-items: center;
  justify-content: center;
  padding-right: 15px;
}
.levels {
  padding-top: 10px;
}
.levels.buy {
  padding-top: 6px;
}
.level {
  position: relative;
  display: flex;
  align-items: center;
  height: 41px;
  padding: 0 16px 0 21px;
}
.depth {
  position: absolute;
  right: 5px;
  top: 6px;
  height: 30px;
  background: #cde9cd;
}
.buy .depth {
  background: #f9d5d5;
}
.fore {
  position: relative;
}
.px {
  position: absolute;
  left: 116px;
}
.qty {
  margin-left: auto;
}
.ratio {
  margin: 8px 5px 0 6px;
  height: 10px;
  background: #009900;
}
.ratio i {
  display: block;
  width: 66px;
  height: 10px;
  background: #e63232;
}
.detail {
  margin: 21px 5px 0 6px;
  height: 67px;
  background: #f4f4f4;
  display: flex;
  align-items: center;
  justify-content: center;
  gap: 24px;
  color: #666;
  font-size: 43px;
  line-height: 63px;
}
.detail span {
  padding-top: 4px;
}
.trade {
  height: 71px;
  display: flex;
  align-items: flex-start;
  padding: 0 6px 0 11px;
  position: relative;
  top: -4px;
}
.tp {
  margin-left: 13px;
}
.bottom {
  height: 285px;
  background: #252525;
}
.actions {
  display: flex;
  height: 150px;
}
.act {
  position: relative;
  width: 208px;
  padding-top: 20px;
  display: flex;
  flex-direction: column;
  align-items: center;
  color: #ddd;
  font-size: 35px;
  line-height: 44px;
}
.act span {
  margin-top: 9px;
}
.sector {
  width: 248px;
  padding-top: 11px;
  color: #8c8c9e;
}
.sector span {
  margin: 17px 0 19px;
}
.dot {
  position: absolute;
  right: 51px;
  top: 24px;
  width: 18px;
  height: 18px;
  border-radius: 9px;
  background: #e63232;
}
.sys {
  display: flex;
  gap: 231px;
  margin-top: 50px;
  padding-left: 256px;
}
</style>
